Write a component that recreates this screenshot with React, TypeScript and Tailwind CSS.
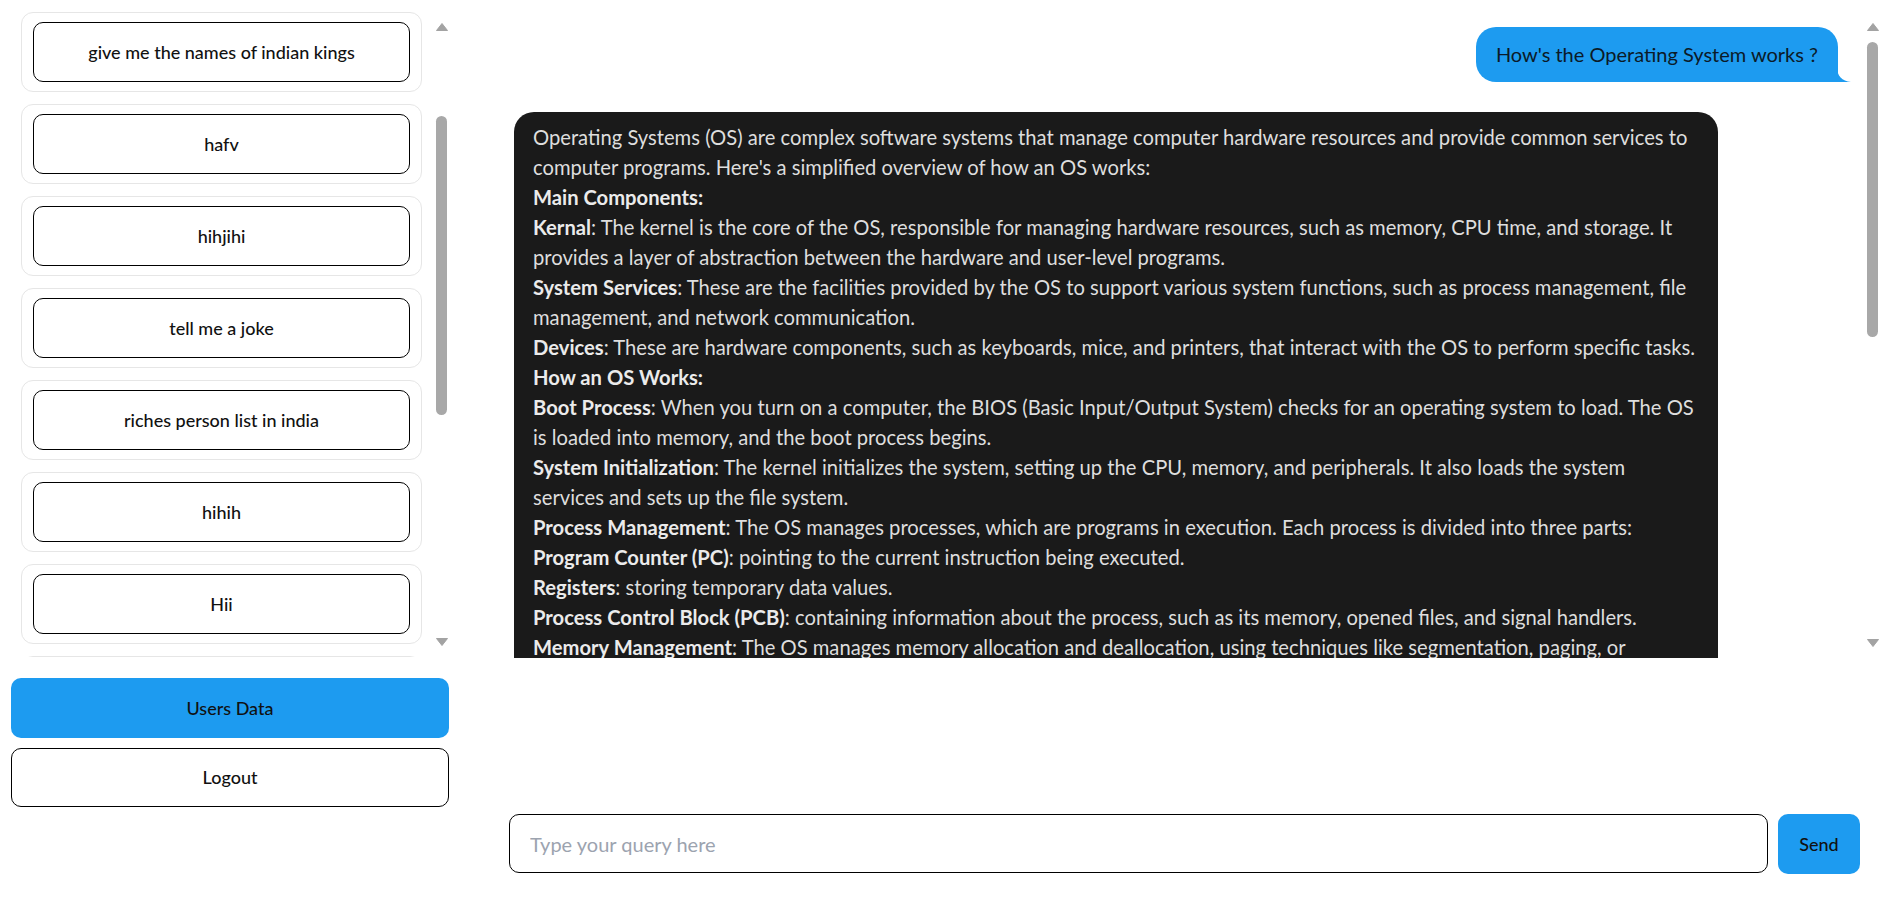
const chats = [
  "give me the names of indian kings",
  "hafv",
  "hihjihi",
  "tell me a joke",
  "riches person list in india",
  "hihih",
  "Hii",
  "what is react",
];

type Line = { b?: string; t?: string };

const answer: Line[] = [
  {
    t: "Operating Systems (OS) are complex software systems that manage computer hardware resources and provide common services to computer programs. Here's a simplified overview of how an OS works:",
  },
  { b: "Main Components:" },
  {
    b: "Kernal",
    t: ": The kernel is the core of the OS, responsible for managing hardware resources, such as memory, CPU time, and storage. It provides a layer of abstraction between the hardware and user-level programs.",
  },
  {
    b: "System Services",
    t: ": These are the facilities provided by the OS to support various system functions, such as process management, file management, and network communication.",
  },
  {
    b: "Devices",
    t: ": These are hardware components, such as keyboards, mice, and printers, that interact with the OS to perform specific tasks.",
  },
  { b: "How an OS Works:" },
  {
    b: "Boot Process",
    t: ": When you turn on a computer, the BIOS (Basic Input/Output System) checks for an operating system to load. The OS is loaded into memory, and the boot process begins.",
  },
  {
    b: "System Initialization",
    t: ": The kernel initializes the system, setting up the CPU, memory, and peripherals. It also loads the system services and sets up the file system.",
  },
  {
    b: "Process Management",
    t: ": The OS manages processes, which are programs in execution. Each process is divided into three parts:",
  },
  { b: "Program Counter (PC)", t: ": pointing to the current instruction being executed." },
  { b: "Registers", t: ": storing temporary data values." },
  {
    b: "Process Control Block (PCB)",
    t: ": containing information about the process, such as its memory, opened files, and signal handlers.",
  },
  {
    b: "Memory Management",
    t: ": The OS manages memory allocation and deallocation, using techniques like segmentation, paging, or virtual\u00a0memory.",
  },
  {
    b: "File System Management",
    t: ": The OS provides a file system that organizes and stores files on storage devices.",
  },
];

function Arrow({ down }: { down?: boolean }) {
  return (
    <svg width="12" height="8" viewBox="0 0 12 8" className="shrink-0">
      <polygon
        points={down ? "0.5,0.5 11.5,0.5 6,7.5" : "6,0.5 11.5,7.5 0.5,7.5"}
        fill="#a3a3a3"
        stroke="#a3a3a3"
        strokeLinejoin="round"
      />
    </svg>
  );
}

function ScrollBar({ thumb }: { thumb: string }) {
  return (
    <div className="flex w-[15px] shrink-0 flex-col items-center pt-[12px] pb-[11px]">
      <Arrow />
      <div className={`w-[11px] shrink-0 rounded-full bg-[#a8a8a8] ${thumb}`} />
      <div className="flex-1" />
      <Arrow down />
    </div>
  );
}

export default function App() {
  return (
    <div className="flex h-screen w-full overflow-hidden bg-white font-['Lato',sans-serif] text-[#111]">
      <aside className="flex w-[460px] shrink-0 flex-col px-[11px] pt-[11px]">
        <div className="flex h-[646px] shrink-0">
          <div className="flex flex-1 flex-col gap-[12px] overflow-hidden pt-[1px] pl-[10px] pr-[12px]">
            {chats.map((c) => (
              <div key={c} className="shrink-0 rounded-[12px] border border-[#e6e6e6] px-[11px] py-[9px]">
                <button className="flex h-[60px] w-full items-center justify-center rounded-[10px] border border-black text-[18px] font-medium">
                  {c}
                </button>
              </div>
            ))}
          </div>
          <ScrollBar thumb="mt-[85px] h-[299px]" />
        </div>
        <div className="mt-[21px] flex flex-col gap-[10px]">
          <button className="h-[60px] w-full rounded-[10px] bg-[#1d9bf0] text-[18px] font-medium">Users Data</button>
          <button className="h-[59px] w-full rounded-[10px] border border-black bg-white text-[18px] font-medium">
            Logout
          </button>
        </div>
      </aside>

      <main className="flex min-w-0 flex-1 flex-col pt-[11px] pl-[49px] pr-[13px]">
        <div className="flex h-[647px] shrink-0">
          <div className="flex min-w-0 flex-1 flex-col overflow-hidden">
            <div className="flex justify-end pt-[16px] pr-[27px]">
              <div className="relative rounded-[20px] rounded-br-none bg-[#1d9bf0] px-[20px] pt-[12px] pb-[13px] text-[20px] leading-[30px] text-[#0b1a28]">
                How's the Operating System works ?
                <svg
                  width="14"
                  height="15"
                  viewBox="0 0 14 15"
                  className="absolute bottom-0 right-[-13px]"
                >
                  <path d="M0 0 C0 9 5 14 14 15 L0 15 Z" fill="#1d9bf0" />
                </svg>
              </div>
            </div>
            <div className="mt-[30px] ml-[5px] max-w-[1204px] shrink-0 rounded-[20px] bg-[#1a1a1a] px-[19px] pt-[10px] pb-[14px] text-[20.2px] leading-[30px] text-[#dedede]">
              {answer.map((l, i) => (
                <div key={i}>
                  {l.b && <strong className="font-bold text-[#ebebeb]">{l.b}</strong>}
                  {l.t}
                </div>
              ))}
            </div>
          </div>
          <ScrollBar thumb="mt-[11px] h-[295px]" />
        </div>

        <form className="mt-auto mb-[28px] mr-[20px] flex gap-[10px]" onSubmit={(e) => e.preventDefault()}>
          <input
            type="text"
            placeholder="Type your query here"
            className="h-[59px] min-w-0 flex-1 rounded-[10px] border border-black px-[20px] text-[20px] outline-none placeholder:text-[#9ca3af]"
          />
          <button type="submit" className="h-[60px] w-[82px] rounded-[10px] bg-[#1d9bf0] text-[18px] font-medium">
            Send
          </button>
        </form>
      </main>
    </div>
  );
}
